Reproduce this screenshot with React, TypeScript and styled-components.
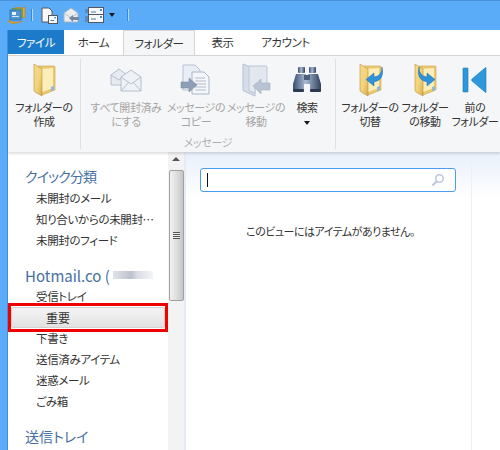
import type { FC, ReactNode } from 'react'
import styled, { createGlobalStyle } from 'styled-components'

const GlobalStyle = createGlobalStyle`
  html, body {
    margin: 0;
    padding: 0;
    background: #fff;
  }
  * {
    box-sizing: border-box;
  }
`

const FolderIcon: FC<{ id: string; children?: ReactNode }> = ({ id, children }) => (
  <svg width="32" height="34" viewBox="0 0 32 34">
    <defs>
      <linearGradient id={id} x1="0" y1="0" x2="1" y2="1">
        <stop offset="0" stopColor="#f6dc8c" />
        <stop offset="0.55" stopColor="#f3d27a" />
        <stop offset="1" stopColor="#d8ad4e" />
      </linearGradient>
    </defs>
    <path d="M10 3 L26 3 Q27 3 27 4 L27 27 L14 32 Z" fill="#ecc96f" stroke="#c9a653" strokeWidth="0.6" />
    <path d="M12 6 L25 5 L25 25 L14 29 Z" fill="#fbeeb8" />
    <path d="M6 1 L14 6 L14 33 L7 29 Q6 28 6 27 Z" fill={`url(#${id})`} stroke="#b8923f" strokeWidth="0.6" />
    <path d="M23 24 L26 23 L26 27 L23 28 Z" fill="#8fb8dc" />
    {children}
  </svg>
)

const EnvelopesIcon: FC = () => (
  <svg width="32" height="24" viewBox="0 0 32 24" fill="#e6ebf2" stroke="#b3bfce" strokeWidth="1">
    <path d="M1 7 L9 1 L17 7 V17 H1 Z" />
    <path d="M1 7 L9 12 L17 7" fill="none" />
    <path d="M11 9 L21 2 L31 9 V23 H11 Z" fill="#eef1f6" />
    <path d="M11 9 L21 16 L31 9" fill="none" />
    <path d="M11 23 L19 14 M31 23 L23 14" fill="none" />
  </svg>
)

const CopyIcon: FC = () => (
  <svg width="32" height="32" viewBox="0 0 32 32">
    <path d="M3 1 H15 L20 6 V26 H3 Z" fill="#e9eef5" stroke="#b6c2d2" />
    <path d="M12 8 H24 L29 13 V30 H12 Z" fill="#f4f6fa" stroke="#a9b6c8" />
    <path d="M15 14 H25 M15 17 H26 M15 20 H26 M15 23 H26 M15 26 H26" stroke="#b2bdcc" strokeWidth="1" />
    <path d="M1 18 H9 V14 L17 21 L9 28 V24 H1 Z" fill="#8d9fb6" stroke="#7c8ea6" strokeWidth="0.6" />
  </svg>
)

const MoveIcon: FC = () => (
  <svg width="30" height="34" viewBox="0 0 30 34">
    <path d="M2 1 L14 6 V33 L3 28 Q2 28 2 27 Z" fill="#d5dde8" stroke="#b6c2d2" />
    <path d="M8 3 H25 Q26 3 26 4 V22 H14 V30 L8 28 Z" fill="#e3e8ef" stroke="#bcc7d5" />
    <path d="M12 23 L20 16 V20 H29 V27 H20 V31 Z" fill="#b8c4d3" stroke="#a4b1c3" strokeWidth="0.6" />
  </svg>
)

const BinocularsIcon: FC = () => (
  <svg width="30" height="27" viewBox="0 0 30 27">
    <defs>
      <linearGradient id="bino" x1="0" y1="0" x2="1" y2="0">
        <stop offset="0" stopColor="#3a4f6e" />
        <stop offset="0.45" stopColor="#a9bad4" />
        <stop offset="1" stopColor="#31425c" />
      </linearGradient>
    </defs>
    <rect x="6" y="1" width="7" height="6" rx="1" fill="url(#bino)" />
    <rect x="17" y="1" width="7" height="6" rx="1" fill="url(#bino)" />
    <path d="M4 8 H14 V14 H16 V8 H26 L29 18 V25 H18 V18 H12 V25 H1 V18 Z" fill="url(#bino)" />
    <rect x="1" y="23" width="11" height="3" rx="1" fill="#2c3a50" />
    <rect x="18" y="23" width="11" height="3" rx="1" fill="#2c3a50" />
    <rect x="12" y="9" width="6" height="5" fill="#4b5e7c" />
  </svg>
)

const PrevIcon: FC = () => (
  <svg width="26" height="28" viewBox="0 0 26 28">
    <rect x="1" y="2" width="5" height="24" rx="0.5" fill="#2f97dc" stroke="#1c78ba" strokeWidth="0.6" />
    <path d="M24 2 V26 Q24 27 23 26 L10 15 Q9 14 10 13 L23 2 Q24 1 24 2 Z" fill="#2f97dc" stroke="#1c78ba" strokeWidth="0.6" />
  </svg>
)

const AppIcon: FC = () => (
  <svg width="18" height="17" viewBox="0 0 18 17">
    <rect x="7" y="0.5" width="10" height="10" fill="#e8a53c" stroke="#b97a1e" strokeWidth="0.5" />
    <rect x="4.5" y="1.5" width="10" height="10" fill="#77b04a" stroke="#5b8a35" strokeWidth="0.5" />
    <rect x="2" y="3" width="11" height="10" fill="#4f93d6" stroke="#2c6aa6" strokeWidth="0.7" />
    <rect x="4" y="5" width="4" height="3" fill="#e9f3fb" />
    <rect x="4" y="9" width="7" height="1" fill="#d5e6f5" />
    <path d="M0.5 13 Q6 17 15 14 Q10 16.5 4 16.5 Q1 16 0.5 13 Z" fill="#f0a020" stroke="#d08410" strokeWidth="0.5" />
  </svg>
)

const QuickDocIcon: FC = () => (
  <svg width="17" height="17" viewBox="0 0 17 17">
    <path d="M1 1 H8 L11 4 V15 H1 Z" fill="#f8f8f8" stroke="#54585e" />
    <rect x="7.5" y="8.5" width="9" height="8" fill="#f4f8fb" stroke="#54585e" />
    <path d="M9.5 13.5 H13" stroke="#54789a" />
    <rect x="13.5" y="10" width="1.5" height="1.5" fill="#3f94d0" />
  </svg>
)

const QuickReplyIcon: FC = () => (
  <svg width="17" height="17" viewBox="0 0 17 17">
    <path d="M1 6 L8 1 L15 6 V15 H1 Z" fill="#e9edf2" stroke="#a9b2bd" />
    <path d="M1 6 L8 11 L15 6" fill="none" stroke="#b6bec8" />
    <path d="M6 11 L10 8 V10 H16 V13 H10 V15 Z" fill="#76859a" />
  </svg>
)

const QuickSendIcon: FC = () => (
  <svg width="19" height="16" viewBox="0 0 19 16">
    <rect x="3.5" y="0.5" width="15" height="8" fill="#f6f8fa" stroke="#54585e" />
    <rect x="3.5" y="7.5" width="15" height="8" fill="#f6f8fa" stroke="#54585e" />
    <rect x="15" y="2" width="2" height="2" fill="#3f94d0" />
    <rect x="15" y="9" width="2" height="2" fill="#3f94d0" />
    <path d="M6 5 H11 M6 12 H11" stroke="#54789a" />
    <path d="M0 3 H3 M0 5 H3 M0 10 H3 M0 12 H3 M0 14 H3" stroke="#54585e" strokeWidth="0.8" />
  </svg>
)

const FlipArrow: FC<{ $flip?: boolean }> = ({ $flip }) => (
  <g transform={$flip ? 'translate(38 0) scale(-1 1)' : undefined}>
    <path d="M28 4 Q28 13 20 14 L20 10 L12 16.5 L20 23 L20 19 Q31 17 28 4 Z" fill="#2f93d9" stroke="#1d6fae" strokeWidth="0.5" />
  </g>
)

const ribbonItems = [
  { icon: <FolderIcon id="f1" />, label: ['フォルダーの', '作成'], width: 72 }
]

const messageItems = [
  { icon: <EnvelopesIcon />, label: ['すべて開封済み', 'にする'], width: 80 },
  { icon: <CopyIcon />, label: ['メッセージの', 'コピー'], width: 60 },
  { icon: <MoveIcon />, label: ['メッセージの', '移動'], width: 60 }
]

const folderItems = [
  { icon: <FolderIcon id="f2"><FlipArrow /></FolderIcon>, label: ['フォルダーの', '切替'], width: 58 },
  { icon: <FolderIcon id="f3"><FlipArrow $flip /></FolderIcon>, label: ['フォルダー', 'の移動'], width: 52 },
  { icon: <PrevIcon />, label: ['前の', 'フォルダー'], width: 48 }
]

const tabs = [
  { label: 'ホーム', width: 59 },
  { label: 'フォルダー', width: 72, active: true },
  { label: '表示', width: 55 },
  { label: 'アカウント', width: 71 }
]

const App: FC = () => (
  <Page>
    <GlobalStyle />
    <TitleBar>
      <AppIcon />
      <QuickSep />
      <QuickIcons>
        <QuickDocIcon />
        <QuickReplyIcon />
        <QuickSendIcon />
        <QuickCaret />
      </QuickIcons>
      <QuickSep />
    </TitleBar>
    <Frame>
      <TabBar>
        <FileTab>ファイル</FileTab>
        {tabs.map((tab) => (
          <Tab key={tab.label} $width={tab.width} $active={tab.active}>
            {tab.label}
          </Tab>
        ))}
      </TabBar>
      <Ribbon>
        <Group>
          <GroupItems>
            {ribbonItems.map((item) => (
              <RibbonButton key={item.label[0]} $width={item.width}>
                <IconSlot>{item.icon}</IconSlot>
                {item.label.map((line) => (
                  <ButtonLine key={line}>{line}</ButtonLine>
                ))}
              </RibbonButton>
            ))}
          </GroupItems>
        </Group>
        <Group>
          <GroupItems>
            <Spacer $width={5} />
            {messageItems.map((item) => (
              <RibbonButton key={item.label.join('')} $width={item.width} $disabled>
                <IconSlot>{item.icon}</IconSlot>
                {item.label.map((line) => (
                  <ButtonLine key={line}>{line}</ButtonLine>
                ))}
              </RibbonButton>
            ))}
            <RibbonButton $width={42}>
              <IconSlot>
                <BinocularsIcon />
              </IconSlot>
              <ButtonLine>検索</ButtonLine>
              <ButtonLine>
                <Caret />
              </ButtonLine>
            </RibbonButton>
            <Spacer $width={7} />
          </GroupItems>
          <GroupLabel>メッセージ</GroupLabel>
        </Group>
        <LastGroup>
          <GroupItems>
            <Spacer $width={5} />
            {folderItems.map((item) => (
              <RibbonButton key={item.label.join('')} $width={item.width}>
                <IconSlot>{item.icon}</IconSlot>
                {item.label.map((line) => (
                  <ButtonLine key={line}>{line}</ButtonLine>
                ))}
              </RibbonButton>
            ))}
          </GroupItems>
        </LastGroup>
      </Ribbon>
      <Body>
        <Sidebar>
          <SectionTitle $top={12} $height={24} $spacing={-0.9}>
            クイック分類
          </SectionTitle>
          <NavItem>未開封のメール</NavItem>
          <NavItem>知り合いからの未開封…</NavItem>
          <NavItem>未開封のフィード</NavItem>
          <SectionTitle $top={13} $height={22} $size={15}>
            Hotmail.co (<Blur />
          </SectionTitle>
          <NavItem>受信トレイ</NavItem>
          <SelectedItem>重要</SelectedItem>
          <NavItem>下書き</NavItem>
          <NavItem>送信済みアイテム</NavItem>
          <NavItem>迷惑メール</NavItem>
          <NavItem>ごみ箱</NavItem>
          <SectionTitle $top={12} $height={23}>
            送信トレイ
          </SectionTitle>
        </Sidebar>
        <Scrollbar>
          <ScrollUp />
          <ScrollThumb>
            <ThumbGrip />
          </ScrollThumb>
        </Scrollbar>
        <MainPane>
          <SearchBox>
            <SearchCursor />
            <svg width="14" height="14" viewBox="0 0 14 14" fill="none" stroke="#bcc8da">
              <circle cx="8.5" cy="5.5" r="3.7" strokeWidth="1.6" />
              <path d="M5.8 8.2 L1.5 12.5" strokeWidth="2.2" />
            </svg>
          </SearchBox>
          <EmptyText>このビューにはアイテムがありません。</EmptyText>
        </MainPane>
        <RightStrip />
      </Body>
    </Frame>
  </Page>
)

const font = `'Noto Sans CJK JP', 'Noto Sans', sans-serif`

const Page = styled.div`
  display: flex;
  flex-direction: column;
  width: 500px;
  height: 450px;
  overflow: hidden;
  background: #5aabf8;
  border-top: 1px solid #4a90d8;
  font-family: ${font};
  font-feature-settings: 'palt';
`

const TitleBar = styled.div`
  display: flex;
  align-items: center;
  gap: 5px;
  height: 29px;
  padding: 0 0 1px 8px;
`

const QuickIcons = styled.div`
  display: flex;
  align-items: center;
  gap: 5px;
  margin: 0 7px 0 3px;
`

const QuickSep = styled.span`
  width: 2px;
  height: 12px;
  background: #b5d6f5;
  border-left: 1px solid #3d87ce;
`

const Caret = styled.span`
  display: inline-block;
  width: 0;
  height: 0;
  margin: 0 4px;
  border-left: 3px solid transparent;
  border-right: 3px solid transparent;
  border-top: 4px solid #1b1b1b;
  vertical-align: middle;
`

const QuickCaret = styled(Caret)`
  margin: 0;
`

const Frame = styled.div`
  display: flex;
  flex: 1;
  flex-direction: column;
  min-height: 0;
  margin-left: 7px;
  border-left: 1px solid #3f8fdc;
  background: #fff;
`

const TabBar = styled.div`
  display: flex;
  height: 25px;
  background: #fff;
`

const FileTab = styled.div`
  display: flex;
  align-items: center;
  justify-content: center;
  width: 56px;
  height: 24px;
  background: #1b7ac9;
  color: #fff;
  font-size: 11.5px;
  letter-spacing: -0.4px;
`

const Tab = styled.div<{ $width: number; $active?: boolean }>`
  display: flex;
  align-items: center;
  justify-content: center;
  width: ${(props) => props.$width}px;
  height: ${(props) => (props.$active ? '25px' : '24px')};
  margin-bottom: ${(props) => (props.$active ? '-1px' : '0')};
  position: relative;
  z-index: 1;
  background: ${(props) => (props.$active ? '#f5f6f7' : '#fff')};
  border: solid #d4d4d4;
  border-width: ${(props) => (props.$active ? '1px 1px 0 1px' : '0')};
  color: #333;
  font-size: 11.5px;
  letter-spacing: -0.4px;
`

const Ribbon = styled.div`
  display: flex;
  height: 97px;
  padding: 3px 0;
  background: #f5f6f7;
  border-top: 1px solid #d4d4d4;
  box-shadow: 0 2px 2px rgba(0, 0, 0, 0.12);
  position: relative;
`

const Group = styled.div`
  display: flex;
  flex-direction: column;
  align-items: center;
  border-right: 1px solid #dee0e3;
`

const LastGroup = styled(Group)`
  border-right: 0;
`

const GroupItems = styled.div`
  display: flex;
  height: 76px;
`

const Spacer = styled.div<{ $width: number }>`
  width: ${(props) => props.$width}px;
`

const GroupLabel = styled.div`
  height: 14px;
  color: #b0b0b0;
  font-size: 11px;
  letter-spacing: -0.3px;
  line-height: 14px;
`

const RibbonButton = styled.div<{ $width: number; $disabled?: boolean }>`
  display: flex;
  flex-direction: column;
  align-items: center;
  width: ${(props) => props.$width}px;
  color: ${(props) => (props.$disabled ? '#a5a5a5' : '#333')};
`

const IconSlot = styled.div`
  display: flex;
  align-items: center;
  justify-content: center;
  height: 41px;
`

const ButtonLine = styled.div`
  height: 14px;
  font-size: 11px;
  letter-spacing: -0.4px;
  line-height: 14px;
  white-space: nowrap;
`

const Body = styled.div`
  display: flex;
  flex: 1;
  min-height: 0;
`

const Sidebar = styled.div`
  width: 160px;
  background: #fff;
`

const SectionTitle = styled.div<{ $top: number; $height: number; $size?: number; $spacing?: number }>`
  display: flex;
  align-items: center;
  height: ${(props) => props.$height}px;
  margin-top: ${(props) => props.$top}px;
  padding-left: 17px;
  color: #46709f;
  font-size: ${(props) => props.$size ?? 14}px;
  letter-spacing: ${(props) => props.$spacing ?? 0}px;
  white-space: nowrap;
`

const Blur = styled.span`
  width: 40px;
  height: 8px;
  margin-left: 3px;
  background: linear-gradient(90deg, #e0e4ea, #bcc2cc 45%, #d9dce2 60%, #f4f5f6);
`

const NavItem = styled.div`
  height: 21px;
  padding-left: 28px;
  color: #333;
  font-size: 11.5px;
  letter-spacing: -0.35px;
  line-height: 21px;
  white-space: nowrap;
`

const SelectedItem = styled.div`
  position: relative;
  height: 21px;
  margin: 0 3px;
  padding-left: 34px;
  background: linear-gradient(#f4f4f4, #e2e2e2);
  border: 1px solid #d2d2d2;
  border-radius: 2px;
  color: #333;
  font-size: 12px;
  line-height: 19px;

  &::after {
    content: '';
    position: absolute;
    inset: -5px -4px -5px -4px;
    border: 3px solid #f00000;
  }
`

const Scrollbar = styled.div`
  display: flex;
  flex-direction: column;
  align-items: center;
  width: 16px;
  background: #f3f3f3;
`

const ScrollUp = styled.span`
  width: 0;
  height: 0;
  margin: 5px 0 9px;
  border-left: 4px solid transparent;
  border-right: 4px solid transparent;
  border-bottom: 4px solid #555;
`

const ScrollThumb = styled.div`
  display: flex;
  align-items: center;
  justify-content: center;
  width: 15px;
  height: 131px;
  background: linear-gradient(90deg, #f2f2f2, #dedede 50%, #c4c4c4);
  border: 1px solid #a0a0a0;
  border-radius: 2px;
`

const ThumbGrip = styled.span`
  width: 7px;
  height: 7px;
  background: repeating-linear-gradient(#555 0 1px, #eee 1px 2px);
`

const MainPane = styled.div`
  display: flex;
  flex-direction: column;
  align-items: center;
  width: 288px;
  padding-top: 16px;
  background: linear-gradient(#e8f0fa, #fff 46px);
  border-left: 2px solid #e4ebf5;
  border-right: 1px solid #edf1f7;
`

const SearchBox = styled.div`
  display: flex;
  align-items: center;
  justify-content: space-between;
  width: 256px;
  height: 24px;
  margin-left: -2px;
  padding: 0 10px 0 6px;
  background: #fff;
  border: 1px solid #4c9df0;
  border-radius: 3px;
`

const SearchCursor = styled.span`
  width: 1px;
  height: 14px;
  background: #111;
`

const EmptyText = styled.div`
  margin-top: 31px;
  margin-left: 4px;
  color: #333;
  font-size: 11px;
  letter-spacing: -0.5px;
  line-height: 16px;
`

const RightStrip = styled.div`
  flex: 1;
  background: linear-gradient(#e8f0fa, #fff 46px);
`

export default App
